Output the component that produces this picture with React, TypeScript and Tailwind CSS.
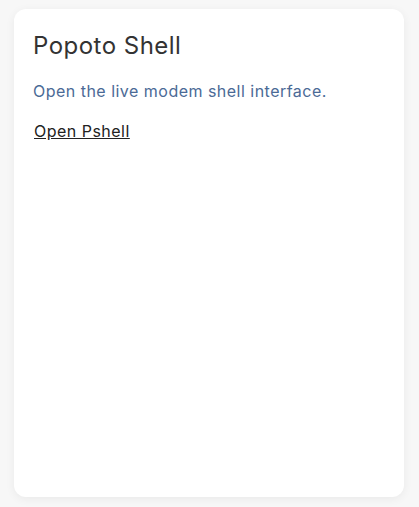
export default function App() {
  return (
    <div
      className="min-h-[507px] w-full bg-[#f7f7f7] pt-[9px] pl-[14px] pr-[15px] pb-[10px]"
      style={{ fontFamily: "Inter, 'Noto Sans', sans-serif" }}
    >
      <div className="h-[488px] rounded-xl bg-white px-[19px] pt-[22px] tracking-[0.03em] shadow-[0_2px_10px_rgba(0,0,0,0.06)]">
        <h2 className="text-[24px] leading-[30px] font-normal text-[#333]">Popoto Shell</h2>
        <p className="mt-[20px] text-[16px] leading-[20px] text-[#4b6a96]">
          Open the live modem shell interface.
        </p>
        <a href="#" className="mt-[20px] ml-[1px] inline-block text-[16px] leading-[20px] text-[#222] underline">
          Open Pshell
        </a>
      </div>
    </div>
  );
}
